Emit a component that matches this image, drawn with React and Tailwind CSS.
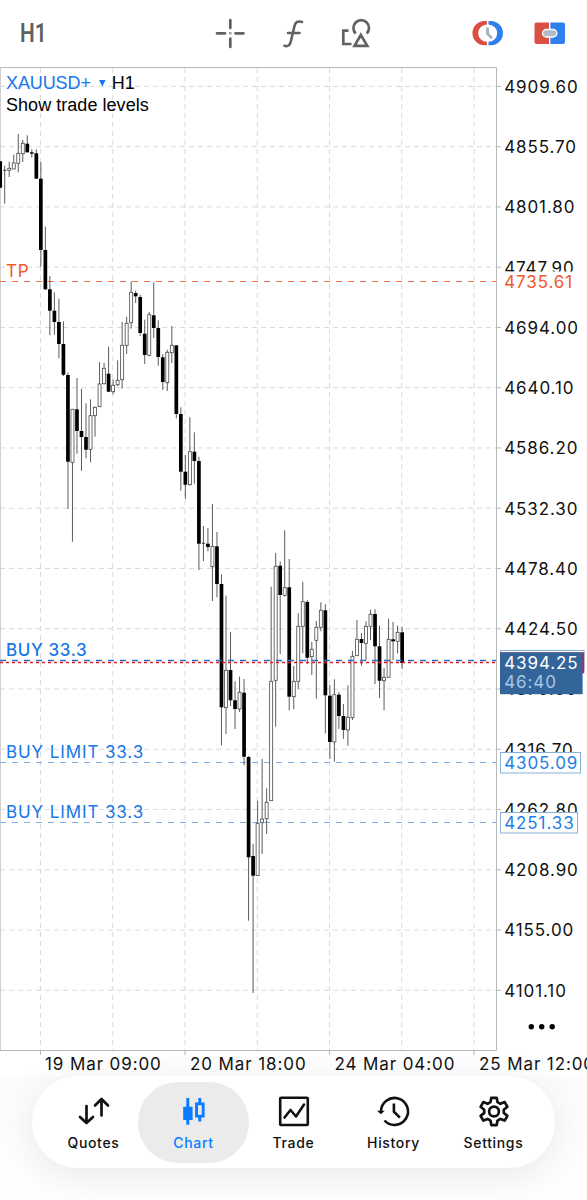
import React from "react";

// Each candle: [high, bodyTop, bodyBottom, low, filled]
const CANDLES = [
  [161.3, 161.3, 187.7, 187.7, 1], [165.7, 170.3, 170.3, 203.7, 0], [161.7, 168.3, 170.3, 177, 0],
  [154.7, 163, 169, 169, 0], [134, 153.3, 163.3, 172.3, 0], [140, 143.3, 153.7, 162, 0],
  [135.3, 143.7, 152.3, 152.7, 1], [149.3, 152.3, 153.7, 157.7, 1], [149.3, 153.3, 178.7, 179, 1],
  [162, 178.7, 250, 266.7, 1], [226.7, 250, 289.3, 290, 1], [276, 289.3, 310.7, 335.3, 1],
  [292.3, 310.7, 322, 334.7, 1], [298.7, 322, 344, 358.3, 1], [321.3, 344, 374.7, 376, 1],
  [372.7, 375, 461.7, 509, 1], [409.3, 409.3, 462.3, 541.7, 0], [378, 409.3, 431, 453.7, 1],
  [389, 431, 437, 470.7, 1], [403.3, 437, 449.7, 458.3, 1], [399.3, 415.7, 449.3, 462.3, 0],
  [406.5, 407.3, 415.7, 436.7, 0], [362, 384, 406.7, 406.7, 0], [363, 368.3, 383.7, 384.5, 0],
  [346.7, 373.7, 391.7, 392, 1], [379.3, 385.3, 391.7, 394.3, 0], [360.3, 380.3, 384.7, 386, 0],
  [322, 345.3, 379.7, 388.5, 0], [316.7, 323.3, 345.3, 354, 0], [281.3, 292.3, 322.7, 328.7, 0],
  [290.7, 293, 296.3, 303, 1], [294.7, 297, 333, 336, 1], [319.7, 333.7, 355, 364, 1],
  [312, 314.7, 355.3, 356.3, 0], [282.3, 315.3, 328, 338, 1], [320.3, 328, 357, 365.7, 1],
  [354, 357.3, 382, 390, 1], [349.7, 352.3, 382.7, 391, 0], [326, 345.3, 352.7, 363, 0],
  [345, 345.3, 414, 418.3, 1], [407.3, 414, 471.7, 490.7, 1], [455, 471.7, 484.7, 499, 1],
  [417.3, 451.7, 484.7, 485.7, 0], [432.3, 451.7, 461, 483.7, 1], [456.7, 461, 543.7, 570, 1],
  [526, 543.3, 543.3, 561, 0], [528, 543.7, 547, 551.3, 1], [504, 546.3, 566.7, 601, 0],
  [532, 546.3, 584, 597.3, 1], [574.3, 584, 707.3, 745.3, 1], [595.7, 670.3, 707.7, 734, 0],
  [632, 670, 700.3, 706, 1], [681.3, 700.3, 709, 729, 1], [676.7, 692.3, 709, 712, 0],
  [679, 692.7, 756.7, 765.3, 1], [756, 757, 857.3, 920.7, 1], [843.7, 856, 875.7, 993, 1],
  [800.7, 823.3, 875.7, 876, 0], [759, 819, 822.7, 854, 0], [788.3, 802.3, 818.7, 834, 0],
  [586.7, 681.3, 800.7, 801, 0], [553, 566.3, 680.3, 726.7, 0], [561.3, 565.7, 595, 654, 1],
  [530.3, 587.7, 595.3, 596.7, 0], [559, 587.3, 696.7, 710.3, 1], [666, 681.3, 696.7, 709.3, 0],
  [613.3, 626.3, 681.3, 689, 0], [581.7, 601.7, 626.3, 653.3, 0], [600, 602, 657.7, 664, 1],
  [642, 649.3, 656.7, 675, 0], [621, 627.3, 640.3, 698.7, 0], [602.3, 610.3, 627.3, 631.3, 0],
  [604.3, 610.3, 695.3, 733.3, 1], [685, 695.7, 742, 759, 1], [679.3, 694.7, 742, 761.7, 0],
  [692.3, 694.7, 716, 729, 1], [704, 716, 730, 738.7, 1], [685.3, 717.3, 730, 745.7, 0],
  [651, 656.3, 717.7, 720, 0], [620, 639.3, 655.7, 656, 0], [633, 639, 643, 665.7, 1],
  [621.3, 626.3, 643.3, 660, 0], [609.7, 614.3, 626.3, 640, 0], [609.3, 614, 646.3, 684, 1],
  [625.7, 646.3, 680.7, 698, 1], [668, 677.3, 680.7, 710.3, 0], [618.7, 639.3, 677.3, 678, 0],
  [622, 639.3, 641.3, 660, 1], [625.7, 632.3, 641.3, 653.3, 0], [627, 632.3, 663, 669, 1],
];

const PRICES = Array.from({ length: 16 }, (_, i) => (4909.6 - 53.9 * i).toFixed(2));
const GRID_X = [40.5, 112.7, 185, 257.3, 329.5, 401.7, 474];
const DATES = [
  [40.5, 45, "19 Mar 09:00"],
  [185, 190, "20 Mar 18:00"],
  [329.5, 334.5, "24 Mar 04:00"],
  [474, 479, "25 Mar 12:00"],
];

function Candle({ x, data }) {
  const [high, top, bottom, low, filled] = data;
  return (
    <g>
      <line x1={x} x2={x} y1={high} y2={low} stroke="#4a4a4a" strokeWidth="0.9" />
      {filled ? (
        <rect x={x - 1.85} y={top} width="3.7" height={Math.max(1, bottom - top)} fill="#000" />
      ) : bottom - top < 0.5 ? (
        <line x1={x - 1.7} x2={x + 1.7} y1={top} y2={top} stroke="#333" strokeWidth="0.9" />
      ) : (
        <rect x={x - 1.5} y={top} width="3" height={bottom - top} fill="#fff" stroke="#4a4a4a" strokeWidth="0.8" />
      )}
    </g>
  );
}

function Chart() {
  return (
    <svg width="587" height="1009" viewBox="0 67 587 1009" className="block font-['Inter',sans-serif] text-[17px] tracking-[0.9px]">
      <g stroke="#dadada" strokeWidth="1" fill="none">
        {PRICES.map((p, i) => (
          <line key={p} x1="0" x2="496" y1={86.4 + i * 60.26} y2={86.4 + i * 60.26} strokeDasharray="5 4" />
        ))}
        {GRID_X.map((x) => (
          <line key={x} x1={x} x2={x} y1="68" y2="1050" strokeDasharray="5 4" />
        ))}
      </g>
      <g stroke="#b8b8b8" strokeWidth="1" fill="none">
        <path d="M0 67.5H496.5V1050.5H0" />
        <path d="M0.5 67V1050" stroke="#d0d0d0" />
        {PRICES.map((p, i) => (
          <path key={p} d={`M496.5 ${86.4 + i * 60.26}h4.5`} />
        ))}
        {DATES.map(([x]) => (
          <path key={x} d={`M${x} 1050v5`} />
        ))}
      </g>

      <line x1="0" x2="496" y1="281.5" y2="281.5" stroke="#f0714c" strokeDasharray="6 6" />
      <g stroke="#7fb0de">
        <line x1="0" x2="496" y1="762.5" y2="762.5" strokeDasharray="6 6" />
        <line x1="0" x2="496" y1="822.5" y2="822.5" strokeDasharray="6 6" />
      </g>

      {CANDLES.map((c, i) => (
        <Candle key={i} x={0.2 + i * 4.516} data={c} />
      ))}

      <line x1="0" x2="496" y1="660.5" y2="660.5" stroke="#2a6fd0" strokeWidth="1.4" strokeDasharray="6 6" />
      <line x1="0" x2="496" y1="662.5" y2="662.5" stroke="#dc1f26" strokeWidth="1.4" strokeDasharray="3 3" />

      <text x="6" y="276.500" fill="#f2592a">TP</text>
      <g fill="#1677e6">
        <text x="6" y="656.300" className="font-medium tracking-[0.600px]">BUY 33.3</text>
        <text x="6" y="758">BUY LIMIT 33.3</text>
        <text x="6" y="818">BUY LIMIT 33.3</text>
      </g>

      <g fill="#111">
        {PRICES.map((p, i) => (
          <text key={p} x="504.2" y={92.8 + i * 60.26}>{p}</text>
        ))}
        {DATES.map(([, x, label]) => (
          <text key={label} x={x} y="1069.7">{label}</text>
        ))}
      </g>

      <rect x="502" y="271.5" width="80" height="20" fill="#fff" />
      <text x="504.2" y="287.5" fill="#f2592a">4735.61</text>

      <rect x="500.5" y="752.5" width="80" height="20.5" fill="#fff" stroke="#85b0d8" />
      <text x="504.2" y="768.7" fill="#1f7fe8">4305.09</text>
      <rect x="500.5" y="812.5" width="77" height="20.5" fill="#fff" stroke="#85b0d8" />
      <text x="504.2" y="828.8" fill="#1f7fe8">4251.33</text>

      <rect x="500.5" y="650.5" width="83.5" height="20" fill="#fff" stroke="#85b0d8" />
      <rect x="500" y="652.3" width="84.2" height="21" fill="#dc143c" />
      <rect x="500" y="652.3" width="82.6" height="41.9" fill="#33659a" />
      <text x="504.2" y="669" fill="#fff">4394.25</text>
      <text x="504.2" y="688.3" fill="#a9c6e4">46:40</text>

      <g fill="#000">
        <circle cx="531.3" cy="1026.7" r="2.7" />
        <circle cx="541.7" cy="1026.7" r="2.7" />
        <circle cx="552.2" cy="1026.7" r="2.7" />
      </g>
    </svg>
  );
}

const TABS = [
  {
    label: "Quotes",
    icon: (
      <g fill="none" stroke="#111" strokeWidth="2.7" strokeLinecap="round" strokeLinejoin="round">
        <path d="M9.5 12V29M3 23l6.500 6 6.500-6" />
        <path d="M24.500 21.500V5M18 11.500l6.500-6.500 6.500 6.500" />
      </g>
    ),
  },
  {
    label: "Chart",
    active: true,
    icon: (
      <g fill="#0a7cff">
        <path d="M9.300 4h3v8.700h3.300v13.300h-3.300v4.700h-3V26H6.200V12.700h3.100z" />
        <path fillRule="evenodd" d="M21.300 4h3v4.500h3.300v15h-3.300v4h-3v-4h-3.200v-15h3.200zM21 11.300v9.400h3.800v-9.400z" />
      </g>
    ),
  },
  {
    label: "Trade",
    icon: (
      <g fill="none" stroke="#111" strokeWidth="2.6" strokeLinejoin="round" strokeLinecap="round">
        <rect x="3.200" y="3.700" width="27.600" height="27.300" rx="1" />
        <path d="M7.500 23.500l6-7.500 5.500 6.500 8-12" />
      </g>
    ),
  },
  {
    label: "History",
    icon: (
      <g fill="none" stroke="#111" strokeWidth="2.600">
        <path d="M4 17.500A13.500 13.500 0 1 1 7.500 26.500" />
        <path d="M16.900 9.500v8.200l6 6" />
        <path d="M0 16.700h7.800l-3.900 3.500z" fill="#111" stroke="none" />
      </g>
    ),
  },
  {
    label: "Settings",
    icon: (
      <g fill="none" stroke="#111" strokeWidth="2.700" strokeLinejoin="round">
        <path d="M14.300 3.800h5.400l.8 4.300 2.900 1.700 4.300-1.700 2.700 4.700-3.600 2.900v3.300l3.600 2.900-2.700 4.700-4.300-1.700-2.900 1.700-.8 4.500h-5.400l-.8-4.500-2.900-1.700-4.300 1.700-2.700-4.700 3.600-2.900v-3.300l-3.600-2.900 2.700-4.700 4.300 1.700 2.900-1.700z" />
        <circle cx="17" cy="17.500" r="4.900" />
      </g>
    ),
  },
];

function Toolbar() {
  return (
    <header className="flex h-[67px] items-center pb-0.5">
      <span className="ml-5 w-[195px] font-['Roboto',sans-serif] text-[26px] leading-none font-semibold text-[#5f5f5f]">
        <span className="inline-block origin-left scale-x-[0.8]">H1</span>
      </span>
      <svg width="32" height="32" viewBox="0 0 32 32" className="mr-[36px]" stroke="#626262" strokeWidth="2.700" strokeLinecap="round">
        <path d="M2 16.300h8M20.500 16.300h8M15.300 3v8M15.300 21.500v8.500" />
        <circle cx="15.300" cy="16.300" r="0.300" strokeWidth="2" />
      </svg>
      <svg width="24" height="32" viewBox="0 0 24 32" className="mr-[34px]" fill="none" stroke="#626262" strokeWidth="2.600" strokeLinecap="round">
        <path d="M19 5c-4-1.500-6.500 0-7.500 4l-3.700 15.500c-.9 4-3 5.300-6.300 4.300M5 16h11.500" />
      </svg>
      <svg width="32" height="32" viewBox="0 0 32 32" className="mr-[98px]" fill="none" stroke="#626262" strokeWidth="2.700">
        <path d="M7.500 13.700H2.300v13.300h8.200" />
        <path d="M14.700 16.500a7.800 7.800 0 1 1 11 0" />
        <path d="M19.800 18l-6.300 10.800h12.800z" />
      </svg>
      <svg width="34" height="32" viewBox="0 0 34 32" className="mr-[29px]">
        <path d="M15.900 4H13.600a12.150 12.150 0 0 0 0 24.300h2.300V24.800a8.650 8.650 0 0 1 0-17.300z" fill="#d94f43" />
        <path d="M17.500 4h2.300a12.150 12.150 0 0 1 0 24.300h-2.300v-3.500a8.650 8.650 0 0 0 0-17.300z" fill="#2f80ed" />
        <path d="M16.500 10.500v6.200l4.500 4.500" fill="none" stroke="#a9b4c0" strokeWidth="2.900" />
      </svg>
      <svg width="32" height="32" viewBox="0 0 32 32">
        <path d="M2.500 5.500H15v21.500H2.500A2 2 0 0 1 .5 25V7.500a2 2 0 0 1 2-2z" fill="#d94f43" />
        <path d="M16.400 5.500H29a2 2 0 0 1 2 2v17.500a2 2 0 0 1-2 2H16.400z" fill="#2f80ed" />
        <rect x="8.500" y="12.500" width="14.400" height="7.500" rx="3.750" fill="#b2bcc6" stroke="#fff" strokeWidth="1.300" />
      </svg>
    </header>
  );
}

export default function App() {
  return (
    <div className="h-[1200px] w-[587px] overflow-hidden bg-white">
      <Toolbar />
      <main className="relative h-[1009px]">
        <Chart />
        <div className="absolute top-[5px] left-[6px] font-['Liberation_Sans',sans-serif] text-[18px] leading-[22px] text-black">
          <div className="flex items-center">
            <span className="tracking-[-0.100px] text-[#1677f0]">XAUUSD+</span>
            <span className="ml-[8px] h-[7px] w-[7px] bg-[#1677f0] [clip-path:polygon(0_0,100%_0,50%_100%)]" />
            <span className="ml-[6px]">H1</span>
          </div>
          <div className="tracking-[0.040px]">Show trade levels</div>
        </div>
      </main>
      <div className="flex h-[124px] items-start justify-center bg-linear-to-b from-[#fcfcfc] to-white">
        <nav className="flex h-[92px] w-[523px] items-center justify-center rounded-[46px] bg-white shadow-[0_8px_40px_rgba(0,0,0,0.09)]">
          {TABS.map((tab) => (
            <button
              key={tab.label}
              className={
                tab.active
                  ? "-mx-[5.500px] flex h-[81px] w-[111px] flex-col items-center rounded-[40px] bg-[#ebebeb] text-[#0a7cff]"
                  : "flex h-[81px] w-[100px] flex-col items-center text-[#111]"
              }
            >
              <svg width="34" height="34" viewBox="0 0 34 34" className="mt-[12.500px]">{tab.icon}</svg>
              <span className="mt-[4.500px] font-['Inter',sans-serif] text-[14px] leading-5 font-medium tracking-[0.650px]">{tab.label}</span>
            </button>
          ))}
        </nav>
      </div>
    </div>
  );
}
